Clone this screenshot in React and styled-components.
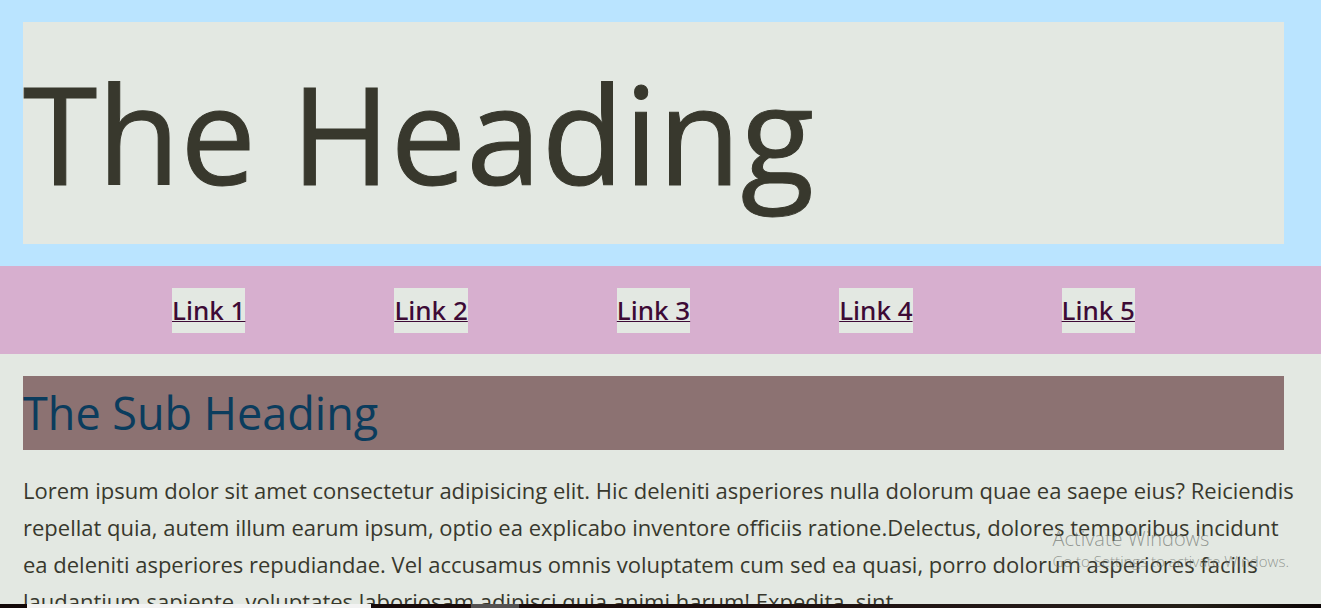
import React from 'react';
import styled, { createGlobalStyle } from 'styled-components';

const Global = createGlobalStyle`
  * { box-sizing: border-box; margin: 0; padding: 0; }
  html, body, #root { height: 100%; }
  body {
    overflow: hidden;
    background: #e3e8e2;
    color: #38382d;
    font-family: 'Open Sans', 'Noto Sans', sans-serif;
  }
`;
const Page = styled.div`
  position: relative;
  height: 100%;
  overflow: hidden;
`;
const Header = styled.header`
  padding: 22px 37px 22px 23px;
  background: #bae4ff;
`;
const Heading = styled.h1`
  background: #e3e8e2;
  font-size: 135px;
  line-height: 222px;
  font-weight: 400;
  -webkit-text-stroke: 1px currentColor;
`;
const Nav = styled.nav`
  padding: 22px 37px 21px 23px;
  background: #d7afcf;
`;
const NavList = styled.ul`
  display: flex;
  justify-content: space-evenly;
  list-style: none;
`;
const NavLink = styled.a`
  display: block;
  background: #e3e8e2;
  color: #3d0a35;
  font-family: 'Noto Sans', 'Open Sans', sans-serif;
  font-size: 26px;
  line-height: 45px;
  font-weight: 500;
  text-decoration: underline 1px;
`;
const Main = styled.main`
  padding: 22px 22px 22px 23px;
`;
const SubHeading = styled.h2`
  margin-right: 15px;
  background: #8c7272;
  color: #0b3c5d;
  font-size: 45px;
  line-height: 74px;
  font-weight: 500;
`;
const Text = styled.p`
  margin-top: 22px;
  font-size: 22px;
  line-height: 37px;
`;
const Watermark = styled.aside`
  position: absolute;
  right: 32px;
  bottom: 37px;
  color: rgba(110, 115, 110, 0.7);
  font-size: 15px;
  line-height: 20px;
  font-weight: 300;
`;
const WatermarkTitle = styled.div`
  font-size: 20px;
  line-height: 25px;
`;
const Taskbar = styled.div`
  position: absolute;
  left: 0;
  right: 0;
  bottom: 0;
  display: flex;
  gap: 100px;
  height: 4px;
  padding-left: 27px;
  background: linear-gradient(90deg, #120808, #1b0d0c 50%, #241a18 80%, #241f17 90%, #0c0505);
`;
const TaskbarItem = styled.div`
  width: ${(p) => (p.$wide ? '344px' : '48px')};
  background: ${(p) => (p.$wide ? '#f3f3f3' : '#545252')};
`;

export default function App() {
  return (
    <Page>
      <Global />
      <Header><Heading>The Heading</Heading></Header>
      <Nav>
        <NavList>
          {[1, 2, 3, 4, 5].map((n) => (
            <li key={n}><NavLink href="#">{`Link ${n}`}</NavLink></li>
          ))}
        </NavList>
      </Nav>
      <Main>
        <SubHeading>The Sub Heading</SubHeading>
        <Text>
          Lorem ipsum dolor sit amet consectetur adipisicing elit. Hic deleniti asperiores nulla dolorum quae ea saepe eius? Reiciendis repellat quia, autem illum earum ipsum, optio ea explicabo inventore officiis ratione.Delectus, dolores temporibus incidunt ea deleniti asperiores repudiandae. Vel accusamus omnis voluptatem cum sed ea quasi, porro dolorum asperiores facilis laudantium sapiente, voluptates laboriosam adipisci quia animi harum! Expedita, sint
        </Text>
      </Main>
      <Watermark>
        <WatermarkTitle>Activate Windows</WatermarkTitle>
        <div>Go to Settings to activate Windows.</div>
      </Watermark>
      <Taskbar>
        <TaskbarItem $wide />
        <TaskbarItem />
      </Taskbar>
    </Page>
  );
}
